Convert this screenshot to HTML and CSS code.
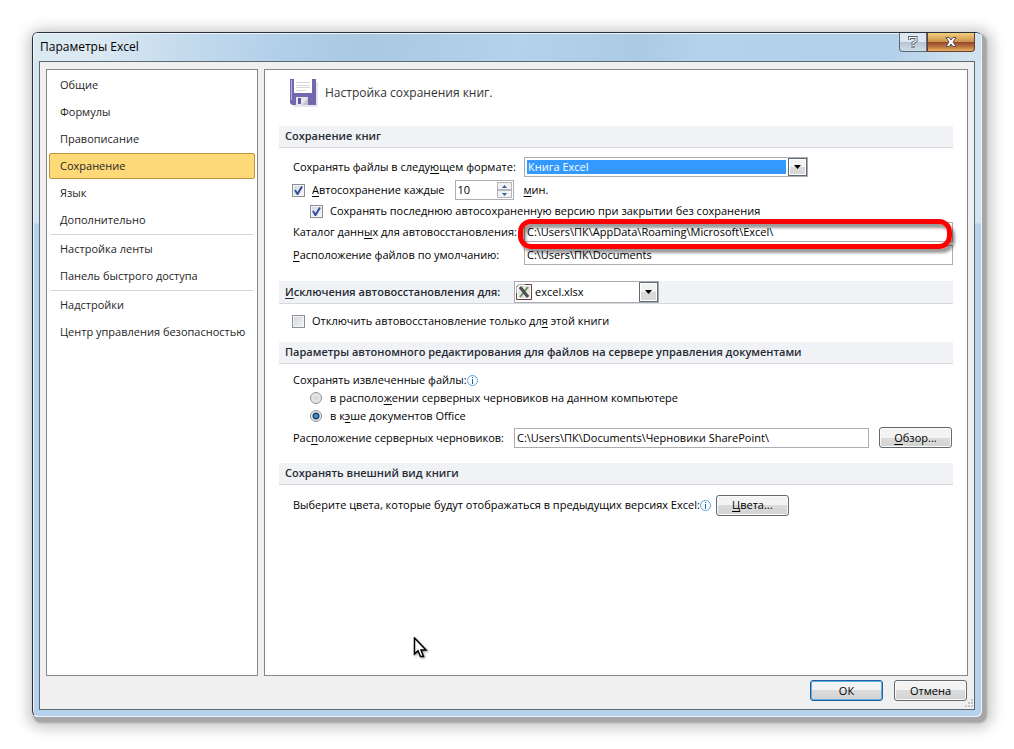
FILE: index.html
```html
<!DOCTYPE html>
<html lang="ru">
<head>
    <meta charset="utf-8">
    <title>Параметры Excel</title>
    <link rel="stylesheet" href="styles.css">
</head>
<body>
    <div class="window">
        <div class="titlebar">
            <h1>Параметры Excel</h1>
            <div class="caption-buttons">
                <button class="help" aria-label="Справка">
                    <svg width="10" height="14" viewBox="0 0 10 14"><path d="M1.500 5V2.500H8V6L5 8V10M5 11V13" fill="none" stroke="#5a626c" stroke-width="3"/><path d="M1.500 4.500V2.500H8V6L5 8V9.500M5 11.500V12.500" fill="none" stroke="#fff" stroke-width="1.200"/></svg>
                </button>
                <button class="close" aria-label="Закрыть">
                    <svg width="12" height="10" viewBox="0 0 12 10"><path d="M1 .5H4L6 3L8 .5H11L8 5L11 9.500H8L6 7L4 9.500H1L4 5Z" fill="#fff" stroke="#56505a"/></svg>
                </button>
            </div>
        </div>
        <div class="client">
            <div class="panels">
                <nav class="sidebar">
                    <a href="#">Общие</a>
                    <a href="#">Формулы</a>
                    <a href="#">Правописание</a>
                    <a href="#" class="active">Сохранение</a>
                    <a href="#">Язык</a>
                    <a href="#">Дополнительно</a>
                    <hr>
                    <a href="#">Настройка ленты</a>
                    <a href="#">Панель быстрого доступа</a>
                    <hr>
                    <a href="#">Надстройки</a>
                    <a href="#">Центр управления безопасностью</a>
                </nav>
                <main class="content">
                    <div class="page-title">
                        <svg width="28" height="28" viewBox="0 0 28 28">
                            <path d="M3 3H28V28H3Z" fill="#e6e6ec"/>
                            <path d="M0 0H26V26H2L0 24Z" fill="#7566ae"/>
                            <path d="M1 1H2V21H1Z" fill="#b9b1da"/>
                            <path d="M4 0H22V14H4Z" fill="#fff"/>
                            <path d="M6 3.500H20M6 6.500H20M6 8.500H20M6 11.500H16" stroke="#d4d7dc"/>
                            <path d="M6 18H18V26H6Z" fill="#e4e6e9"/>
                            <path d="M12 26L18 19V26Z" fill="#c3c6ca"/>
                            <path d="M8 19H11V25H8Z" fill="#6657a0"/>
                        </svg>
                        <p>Настройка сохранения книг.</p>
                    </div>

                    <h2>Сохранение книг</h2>
                    <div class="group books">
                        <div class="row">
                            <label class="wide" for="format">Сохранять файлы в следу<u>ю</u>щем формате:</label>
                            <span class="combo format">
                                <select id="format"><option>Книга Excel</option></select>
                                <span class="arrow"></span>
                            </span>
                        </div>
                        <div class="row">
                            <input type="checkbox" id="autosave" checked>
                            <label for="autosave"><u>А</u>втосохранение каждые</label>
                            <span class="spinner">
                                <input type="number" id="minutes" value="10">
                                <span class="steps">
                                    <button aria-label="Больше"><svg width="5" height="3" viewBox="0 0 5 3"><path d="M0 3L2.500 0L5 3Z"/></svg></button>
                                    <button aria-label="Меньше"><svg width="5" height="3" viewBox="0 0 5 3"><path d="M0 0H5L2.500 3Z"/></svg></button>
                                </span>
                            </span>
                            <label for="minutes"><u>м</u>ин.</label>
                        </div>
                        <div class="row short nested">
                            <input type="checkbox" id="keep" checked>
                            <label for="keep">Сохранять последнюю автосохраненную версию при закрытии без сохранения</label>
                        </div>
                        <div class="row marked">
                            <label class="wide" for="recovery">Каталог данн<u>ы</u>х для автовосстановления:</label>
                            <input type="text" id="recovery" value="C:\Users\ПК\AppData\Roaming\Microsoft\Excel\">
                            <span class="marker"></span>
                        </div>
                        <div class="row">
                            <label class="wide" for="location"><u>Р</u>асположение файлов по умолчанию:</label>
                            <input type="text" id="location" value="C:\Users\ПК\Documents">
                        </div>
                    </div>

                    <h2 class="with-combo">
                        <label for="exceptions"><u>И</u>сключения автовосстановления для:</label>
                        <span class="combo file">
                            <svg width="16" height="16" viewBox="0 0 16 16">
                                <path d="M3 .5H15.500V15.500H.5V3Z" fill="#fff" stroke="#6d3a35"/>
                                <path d="M.5 9V3L3 .5H9" fill="none" stroke="#a9b3a4"/>
                                <path d="M2 4L4 2H14V14H2Z" fill="#e3e6e2"/>
                                <path d="M12 3L4 13" stroke="#6a9460" stroke-width="2"/>
                                <path d="M4 3L12 13" stroke="#4d4a50" stroke-width="3"/>
                            </svg>
                            <select id="exceptions"><option>excel.xlsx</option></select>
                            <span class="arrow"></span>
                        </span>
                    </h2>
                    <div class="group exceptions">
                        <div class="row short">
                            <input type="checkbox" id="disable">
                            <label for="disable">Отключить автовосстановление только дл<u>я</u> этой книги</label>
                        </div>
                    </div>

                    <h2>Параметры автономного редактирования для файлов на сервере управления документами</h2>
                    <div class="group offline">
                        <div class="row short">
                            <span>Сохранять извлеченные файлы:</span>
                            <svg class="info" width="11" height="11" viewBox="0 0 11 11"><circle cx="5.500" cy="5.500" r="5" fill="#fff" stroke="#5aa5dc"/><path d="M5 2H6V3H5ZM5 4H6V9H5Z" fill="#2c5f9e"/></svg>
                        </div>
                        <div class="row short nested">
                            <input type="radio" name="drafts" id="server">
                            <label for="server">в располо<u>ж</u>ении серверных черновиков на данном компьютере</label>
                        </div>
                        <div class="row short nested">
                            <input type="radio" name="drafts" id="cache" checked>
                            <label for="cache">в к<u>э</u>ше документов Office</label>
                        </div>
                        <div class="row drafts">
                            <label class="medium" for="drafts-path">Рас<u>п</u>оложение серверных черновиков:</label>
                            <input type="text" id="drafts-path" value="C:\Users\ПК\Documents\Черновики SharePoint\">
                            <button class="btn"><u>О</u>бзор...</button>
                        </div>
                    </div>

                    <h2>Сохранять внешний вид книги</h2>
                    <div class="group look">
                        <div class="row">
                            <span>Выберите цвета, которые будут отображаться в предыдущих версиях Excel:</span>
                            <svg class="info" width="11" height="11" viewBox="0 0 11 11"><circle cx="5.500" cy="5.500" r="5" fill="#fff" stroke="#5aa5dc"/><path d="M5 2H6V3H5ZM5 4H6V9H5Z" fill="#2c5f9e"/></svg>
                            <button class="btn colors"><u>Ц</u>вета...</button>
                        </div>
                    </div>

                    <svg class="cursor" width="18" height="24" viewBox="0 0 18 24"><path d="M1.500 1V17L5 13.800L7.500 19.500H10.500L8 13H13Z" fill="#fff" stroke="#000" stroke-width="1.500"/></svg>
                </main>
            </div>
            <div class="footer">
                <button class="btn default">ОК</button>
                <button class="btn">Отмена</button>
                <svg class="grip" width="9" height="9" viewBox="0 0 9 9"><path d="M7 0h2v2H7zM4 3h2v2H4zM7 3h2v2H7zM1 6h2v2H1zM4 6h2v2H4zM7 6h2v2H7z" fill="#c4c4c4"/></svg>
            </div>
        </div>
    </div>
</body>
</html>
```
FILE: styles.css
```css
* {
    box-sizing: border-box;
}
body {
    margin: 0;
    padding: 32px 32px 32px 32px;
    min-height: 100vh;
    display: flex;
    background: #fff;
    color: #000;
    font: 11px/16px "Open Sans", "Noto Sans", sans-serif;
}
button, input, select {
    margin: 0;
    font: inherit;
    color: inherit;
}
h1, h2, p {
    margin: 0;
    font-weight: normal;
}
svg {
    display: block;
    flex: none;
}
u {
    text-underline-offset: 2px;
}

/* window frame */
.window {
    flex: 1;
    display: flex;
    flex-direction: column;
    padding: 0 6px 6px;
    border: 1px solid #2b2f3a;
    border-right-color: #e9f3fa;
    border-bottom-color: #e9f3fa;
    border-radius: 6px;
    background: linear-gradient(#d3e5f1 190px, #b5d1ec 191px);
    box-shadow: inset 1px 1px #eef6fb, 3px 4px 2px 2px #a6a6a6, 3px 4px 14px 7px rgba(0, 0, 0, 0.22);
}
.titlebar {
    display: flex;
    justify-content: space-between;
    height: 28px;
    margin: 0 -6px;
    padding-left: 7px;
    border-radius: 5px 5px 0 0;
    background: linear-gradient(100deg, #dbe9f3 60px, #c5dbed 150px, #b3d0ea 240px, #a9c8e2 330px, #b5d2ec 480px, #abcae4 600px, #b5d2ec 660px, #b3d0ea 850px, #d0e2f0 920px);
    box-shadow: inset 1px 1px #eef6fb;
}
h1 {
    font-size: 12px;
    line-height: 28px;
}
.caption-buttons {
    display: flex;
    margin-right: 6px;
}
.caption-buttons button {
    display: flex;
    align-items: center;
    justify-content: center;
    height: 19px;
    padding: 0;
    border: 1px solid #5e6872;
    border-top: 0;
}
.help {
    width: 28px;
    border-radius: 0 0 0 4px;
    background: linear-gradient(#dce7f0 50%, #b4c3d2 50%, #d0deea);
}
.caption-buttons .close {
    width: 48px;
    border-color: #6b3a33;
    border-radius: 0 0 4px 0;
    background: linear-gradient(#f3cf7c, #cc9048 50%, #93452f 50%, #b8703c 75%, #e9b35f);
}
.client {
    flex: 1;
    display: flex;
    flex-direction: column;
    border: 1px solid #5a6872;
    background: #f0f0f0;
}
.panels {
    flex: 1;
    display: flex;
    gap: 6px;
    padding: 7px 6px 0;
}

/* left list */
.sidebar {
    width: 212px;
    display: flex;
    flex-direction: column;
    gap: 1px;
    padding: 2px;
    border: 1px solid #838791;
    background: #fff;
}
.sidebar a {
    height: 26px;
    padding: 0 10px;
    border: 1px solid transparent;
    border-radius: 2px;
    color: #262626;
    line-height: 24px;
    text-decoration: none;
    white-space: nowrap;
}
.sidebar a.active {
    border-color: #c2933f;
    background: #fdd977;
}
.sidebar hr {
    width: 202px;
    height: 1px;
    margin: 0 2px;
    border: 0;
    background: #d5d5d9;
}

/* right panel */
.content {
    position: relative;
    flex: 1;
    padding: 9px 14px;
    border: 1px solid #838791;
    background: #fff;
}
.page-title {
    display: flex;
    align-items: center;
    gap: 7px;
    height: 28px;
    margin-bottom: 19px;
    padding-left: 11px;
    color: #333;
    font-size: 12px;
}
h2 {
    display: flex;
    align-items: center;
    height: 22px;
    padding: 0 0 2px 6px;
    border-bottom: 1px solid #d6d8dc;
    background: #f1f2f6;
    color: #262b33;
    font-size: 11px;
    font-weight: 600;
}
.with-combo {
    height: 23px;
    padding-bottom: 0;
}
.with-combo label {
    width: 229px;
}
.group {
    display: flex;
    flex-direction: column;
    padding-left: 14px;
}
.books {
    gap: 3px;
    padding-top: 9px;
    padding-bottom: 16px;
}
.exceptions {
    padding-top: 9px;
    padding-bottom: 13px;
}
.offline {
    gap: 2px;
    padding-top: 8px;
    padding-bottom: 14px;
}
.look {
    padding-top: 10px;
}
.row {
    display: flex;
    align-items: center;
    height: 20px;
    white-space: nowrap;
}
.short {
    height: 16px;
}
.nested {
    padding-left: 17px;
}
.wide {
    width: 231px;
}
.medium {
    width: 221px;
}
.drafts {
    height: 23px;
}
.drafts .btn {
    margin-left: 10px;
    margin-right: 1px;
}
.colors {
    margin-left: 5px;
}

/* fields */
input[type="text"] {
    flex: 1;
    min-width: 0;
    height: 20px;
    padding: 0 2px 1px;
    border: 1px solid #abadb3;
    background: #fff;
}
input[type="checkbox"] {
    appearance: none;
    width: 13px;
    height: 13px;
    margin-right: 7px;
    margin-left: -1px;
    border: 1px solid #8a8f94;
    background: linear-gradient(135deg, #cfd3d8, #f4f5f6);
    box-shadow: inset 0 0 0 1px #f4f4f4;
}
.nested input[type="checkbox"] {
    margin-left: 0;
}
input[type="checkbox"]:checked {
    background: url("data:image/svg+xml,%3Csvg xmlns='http://www.w3.org/2000/svg' viewBox='0 0 11 11'%3E%3Cpath d='M2 5L4.500 9L9 1.500' fill='none' stroke='%23314e9c' stroke-width='2'/%3E%3C/svg%3E"), linear-gradient(135deg, #cfd6e2, #f6f8fa);
}
input[type="radio"] {
    appearance: none;
    width: 12px;
    height: 12px;
    margin-right: 8px;
    border: 1px solid #8e8f8f;
    border-radius: 50%;
    background: radial-gradient(#d5d5d5, #f4f4f4);
}
input[type="radio"]:checked {
    background: radial-gradient(#3c9fd8 1px, #17355c 3px, #17355c 3px, #eceef0 4px);
}
.combo {
    position: relative;
    display: flex;
    align-items: center;
    height: 20px;
    border: 1px solid #abadb3;
    background: #fff;
}
.combo select {
    appearance: none;
    flex: 1;
    min-width: 0;
    height: 14px;
    padding: 0 20px 0 0;
    border: 0;
    border-radius: 0;
    background: transparent;
    line-height: 14px;
}
.arrow {
    position: absolute;
    top: 0;
    right: 0;
    bottom: 0;
    width: 19px;
    border: 1px solid #5f6b75;
    background: url("data:image/svg+xml,%3Csvg xmlns='http://www.w3.org/2000/svg' width='7' height='4'%3E%3Cpath d='M0 0H7L3.500 4Z'/%3E%3C/svg%3E") center no-repeat, linear-gradient(#f2f2f2 50%, #d8d9d8 50%);
    box-shadow: inset 0 0 0 1px #fff;
    pointer-events: none;
}
.format {
    width: 284px;
    padding-left: 2px;
}
.format select {
    padding-left: 1px;
    background: linear-gradient(to left, #fff 21px, #39f 21px);
    color: #fff;
}
.file {
    width: 145px;
    height: 22px;
    padding-left: 1px;
    font-weight: normal;
    color: #000;
}
.file select {
    padding-left: 3px;
}
.spinner {
    display: flex;
    width: 59px;
    height: 20px;
    margin: 0 10px;
    border: 1px solid #abadb3;
    background: #fff;
}
.spinner input {
    appearance: textfield;
    flex: 1;
    min-width: 0;
    padding: 0 2px;
    border: 0;
    background: none;
}
.steps {
    display: flex;
    flex-direction: column;
    width: 16px;
    padding: 1px 1px 1px 0;
}
.steps button {
    flex: 1;
    display: flex;
    align-items: center;
    justify-content: center;
    padding: 0;
    border: 1px solid #b3b6ba;
    background: #f0f1f2;
}
.steps svg {
    fill: #3a5c9c;
}
.btn {
    width: 73px;
    height: 21px;
    padding: 0;
    border: 1px solid #626a72;
    border-radius: 3px;
    background: linear-gradient(#f3f3f3 50%, #dadbdb 50%, #d3d3d1);
    box-shadow: inset 0 0 0 1px #fafafa;
}
.default {
    border-color: #2a5a9c;
    box-shadow: inset 0 0 0 1px #58b4e8;
}

/* highlighted field */
.marked {
    position: relative;
}
.marker {
    position: absolute;
    top: -3px;
    right: 1px;
    bottom: -7px;
    left: 225px;
    z-index: 1;
    border: 5px solid #f00;
    border-radius: 13px;
    box-shadow: 3px 4px 3px rgba(0, 0, 0, 0.4), inset 3px 4px 3px rgba(0, 0, 0, 0.4);
    pointer-events: none;
}
.cursor {
    position: absolute;
    left: 148px;
    top: 567px;
    filter: drop-shadow(1px 1px 1px rgba(0, 0, 0, 0.4));
}

.footer {
    position: relative;
    display: flex;
    justify-content: flex-end;
    gap: 11px;
    padding: 4px 7px 8px;
}
.grip {
    position: absolute;
    right: 1px;
    bottom: 1px;
}
```
